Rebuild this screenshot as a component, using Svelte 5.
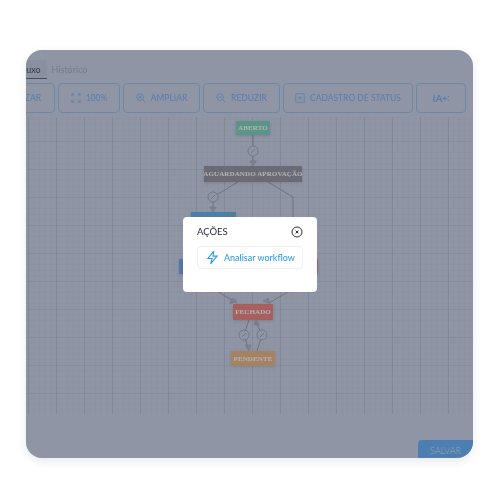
<script>
  const buttons = [
    { label: 'CENTRALIZAR', cls: 'b0' },
    { label: '100%', cls: 'b1', icon: 'fit' },
    { label: 'AMPLIAR', cls: 'b2', icon: 'plus' },
    { label: 'REDUZIR', cls: 'b3', icon: 'minus' },
    { label: 'CADASTRO DE STATUS', cls: 'b4', icon: 'add' }
  ];
  const nodes = [
    { label: 'ABERTO', cls: 'green', x: 210, y: 4, w: 34, h: 14 },
    { label: 'AGUARDANDO APROVAÇÃO', cls: 'grey', x: 178, y: 49, w: 98, h: 16 },
    { label: '', cls: 'sky', x: 165, y: 95, w: 45, h: 16 },
    { label: '', cls: 'blue', x: 153, y: 142, w: 40, h: 15 },
    { label: '', cls: 'red', x: 252, y: 142, w: 40, h: 15 },
    { label: 'FECHADO', cls: 'red', x: 207, y: 187, w: 40, h: 16 },
    { label: 'PENDENTE', cls: 'tan', x: 205, y: 234, w: 44, h: 15 }
  ];
  const lines = [
    'M227 18V45',
    'M212 65L187 80V91',
    'M242 65L267 80V100',
    'M187 172L211 186',
    'M267 172L243 186',
    'M223 203L218 218L222 230',
    'M231 234L236 218L231 207'
  ];
  const arrows = ['M223.5 44L230.5 44L227 49Z', 'M183.5 90L190.5 90L187 95Z', 'M206 181L211 184L204 187Z', 'M242 181L237 184L244 187Z', 'M219 228L225 228L223 234Z', 'M228 208L234 208L230 203Z'];
  const circles = [[227, 34], [187, 80], [187, 170], [267, 170], [218, 218], [236, 218]];
</script>

<div class="page">
  <div class="card">
    <div class="content">
      <div class="tabs">
        <span class="tab active">Fluxo</span>
        <span class="tab">Histórico</span>
      </div>
      <div class="toolbar">
        {#each buttons as b}
          <button class={b.cls}>
            {#if b.icon === 'fit'}
              <svg viewBox="0 0 12 12" width="10" height="10"><path d="M1 4V1H4M8 1H11V4M11 8V11H8M4 11H1V8M1 1L4 4M11 1L8 4M11 11L8 8M1 11L4 8" /></svg>
            {:else if b.icon === 'plus'}
              <svg viewBox="0 0 12 12" width="10" height="10"><circle cx="5" cy="5" r="4" /><path d="M8 8L11.5 11.5M3 5H7M5 3V7" /></svg>
            {:else if b.icon === 'minus'}
              <svg viewBox="0 0 12 12" width="10" height="10"><circle cx="5" cy="5" r="4" /><path d="M8 8L11.5 11.5M3 5H7" /></svg>
            {:else if b.icon === 'add'}
              <svg viewBox="0 0 12 12" width="10" height="10"><rect x="1" y="1" width="10" height="10" /><path d="M3.5 6H8.5M6 3.5V8.5" /></svg>
            {/if}
            {b.label}
          </button>
        {/each}
        <button class="b5"><b>IA</b><svg viewBox="0 0 10 10" width="7" height="7"><path class="fill" d="M4 1L5 4L8 5L5 6L4 9L3 6L0 5L3 4Z" /><circle class="fill" cx="9" cy="2.5" r="1" /><circle class="fill" cx="9" cy="7.5" r="1" /></svg></button>
      </div>
      <div class="canvas">
        <svg class="edges" viewBox="0 0 447 295" width="447" height="295">
          {#each lines as d}<path class="edge" {d} />{/each}
          {#each arrows as d}<path class="arrow" {d} />{/each}
          {#each circles as [x, y]}
            <g transform="translate({x} {y})">
              <circle r="5" class="dot" />
              <path class="edge" d="M-2 2L2 -2" />
            </g>
          {/each}
        </svg>
        {#each nodes as n}
          <div class="node {n.cls}" style="left:{n.x}px;top:{n.y}px;width:{n.w}px;height:{n.h}px">{n.label}</div>
        {/each}
      </div>
      <div class="footer"><button class="save">SALVAR</button></div>
    </div>
    <div class="overlay"></div>
    <div class="modal">
      <div class="head">
        <span>AÇÕES</span>
        <svg viewBox="0 0 12 12" width="12" height="12"><circle cx="6" cy="6" r="5" /><path d="M4.5 4.5L7.5 7.5M7.5 4.5L4.5 7.5" /></svg>
      </div>
      <button class="action">
        <svg viewBox="0 0 12 16" width="11" height="15"><path d="M7.5 1L1 9H5.5L4 15L11 6.5H6.5Z" /></svg>
        Analisar workflow
      </button>
    </div>
  </div>
</div>

<style>
  :global(body) { margin: 0; background: #fff; }
  .page { width: 500px; height: 500px; padding: 50px 27px 42px 26px; box-sizing: border-box; font-family: Lato, "Liberation Sans", sans-serif; }
  .card { position: relative; width: 447px; height: 408px; border-radius: 16px; overflow: hidden; background: #cdd6ec; box-shadow: 0 3px 10px rgba(30, 40, 70, .1); }
  .content { height: 100%; display: flex; flex-direction: column; background: #cdd6ec; filter: blur(.5px); }
  .tabs { height: 29px; display: flex; align-items: flex-end; gap: 1px; margin-left: -11px; flex: none; font-size: 9px; color: #a6b0c8; }
  .tab { height: 19px; line-height: 19px; padding: 0 4px; box-sizing: border-box; }
  .tab.active { color: #4d5570; background: #c6cfe6; border-bottom: 1px solid #6a7088; padding: 0 6px 0 4px; }
  .toolbar { display: flex; gap: 3px; margin: 4px 0 0 -61px; height: 30px; flex: none; }
  button { font-family: inherit; background: none; }
  .toolbar button { height: 30px; border: 1px solid #9dc2ea; border-radius: 4px; color: #7fb4f0; font-size: 8.5px; font-weight: 400; display: flex; align-items: center; justify-content: center; gap: 5px; padding: 0; box-sizing: border-box; flex: none; }
  .toolbar svg { fill: none; stroke: #7fb4f0; stroke-width: .9; }
  .toolbar svg .fill { fill: #7fb4f0; stroke: none; }
  .toolbar b { font-size: 10px; font-weight: 700; }
  .toolbar .b5 { gap: 0; }
  .toolbar .b0 { width: 90px; justify-content: flex-end; padding-right: 13px; }
  .b1 { width: 62px; }
  .b2 { width: 77px; }
  .b3 { width: 77px; }
  .b4 { width: 130px; }
  .b5 { width: 50px; }
  .canvas { position: relative; margin-top: 4px; height: 297px; flex: none;
    background-image:
      linear-gradient(to right, rgba(60, 70, 110, .1) 1px, transparent 1px),
      linear-gradient(to bottom, rgba(60, 70, 110, .05) 1px, transparent 1px),
      linear-gradient(to right, rgba(60, 70, 110, .03) 1px, transparent 1px),
      linear-gradient(to bottom, rgba(60, 70, 110, .03) 1px, transparent 1px);
    background-size: 28px 28px, 28px 28px, 5.6px 5.6px, 5.6px 5.6px;
    background-position: 2px 0, 0 -4px, 2px 0, 0 -4px;
  }
  .edges { position: absolute; left: 0; top: 0; }
  .edge { fill: none; stroke: #9a9eb2; stroke-width: .9; }
  .arrow { fill: #b4b8ca; stroke: #a4a8ba; stroke-width: .5; }
  .dot { fill: #cdd6ec; stroke: #9a9eb2; stroke-width: .8; }
  .node { position: absolute; display: flex; align-items: center; justify-content: center; font-family: "Liberation Serif", serif; font-size: 7px; font-weight: 700; letter-spacing: .1px; color: #fff; white-space: nowrap; box-shadow: 0 1px 3px rgba(0, 0, 0, .12); }
  .green { background: #83d6c2; }
  .grey { background: #999aab; }
  .sky { background: #6cb8ee; }
  .blue { background: #7aa8ee; }
  .red { background: #f08a88; }
  .tan { background: #eabc8e; }
  .footer { flex: 1; position: relative; display: flex; justify-content: flex-end; align-items: flex-end; }
  .save { width: 55px; height: 18px; border: none; border-radius: 4px 0 0 0; background: #6eb5fb; color: #dcebff; font-size: 9px; font-weight: 300; padding: 2px 0 0 0; box-sizing: border-box; display: block; margin: 0; }
  .overlay { position: absolute; inset: 0; background: rgba(0, 0, 0, .3); }
  .modal { position: absolute; left: 157px; top: 167px; width: 134px; height: 75px; background: #fff; border-radius: 4px; padding: 8px 14px; box-sizing: border-box; filter: blur(.25px); }
  .head { display: flex; justify-content: space-between; align-items: center; height: 13px; font-size: 9.5px; color: #2a2e3a; }
  .head svg { fill: none; stroke: #2a2e3a; stroke-width: 1; }
  .action { margin-top: 8px; width: 106px; height: 23px; border: 1px solid #eef0f4; border-radius: 4px; display: flex; align-items: center; padding: 0 0 0 9px; box-sizing: border-box; gap: 6px; color: #2196f3; font-size: 9px; white-space: nowrap; }
  .action svg { fill: none; stroke: #2196f3; stroke-width: 1.1; flex: none; }
</style>
